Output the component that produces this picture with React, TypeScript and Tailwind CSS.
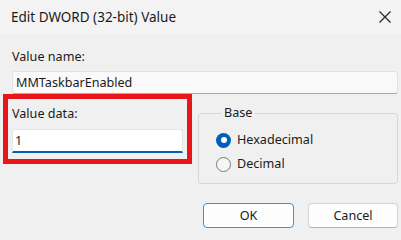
import React, { useState } from 'react';

type Base = 'hex' | 'dec';

function Radio({ checked, label, onClick }: { checked: boolean; label: string; onClick: () => void }) {
  return (
    <button type="button" onClick={onClick} className="flex h-[24px] items-center gap-[6px] text-left">
      {checked ? (
        <span className="flex h-[15px] w-[15px] items-center justify-center rounded-full bg-[#005fb8]">
          <span className="h-[6px] w-[6px] rounded-full bg-white" />
        </span>
      ) : (
        <span className="h-[15px] w-[15px] rounded-full border border-[#7a7a7a] bg-[#f6f6f6]" />
      )}
      <span>{label}</span>
    </button>
  );
}

export default function App() {
  const [value, setValue] = useState('1');
  const [base, setBase] = useState<Base>('hex');

  return (
    <div
      className="flex h-[240px] w-[401px] flex-col overflow-hidden bg-[#f0f0f0] text-[12.6px] leading-[18px] text-[#1b1b1b]"
      style={{ fontFamily: '"Noto Sans", "Open Sans", sans-serif' }}
    >
      {/* title bar */}
      <div className="flex h-[34px] shrink-0 items-center justify-between bg-[#f3f3f3] pl-[11px] pr-[9px]">
        <span className="text-[13.5px]">Edit DWORD (32-bit) Value</span>
        <svg width="14" height="14" viewBox="0 0 14 14" className="text-[#2b2b2b]">
          <path d="M1.5 1.5 L12.5 12.5 M12.5 1.5 L1.5 12.5" stroke="currentColor" strokeWidth="1.3" fill="none" />
        </svg>
      </div>

      <div className="flex flex-col px-[3px]">
        <div className="ml-[9px] mt-[14px]">Value name:</div>
        <div className="ml-[9px] mt-[5px] flex h-[23px] items-center rounded-[3px] border border-[#e2e2e2] border-b-[#a8a8a8] bg-[#f9f9f9] px-[3px]">
          MMTaskbarEnabled
        </div>

        <div className="flex">
          {/* highlighted Value data box */}
          <div className="flex h-[70px] w-[189px] flex-col border-[5px] border-[#e8161b] px-[4px]">
            <div className="mt-[6px]">Value data:</div>
            <div className="mt-[6px] flex h-[24px] items-center rounded-t-[3px] border border-[#e6e6e6] border-b-2 border-b-[#005fb8] bg-white px-[2px]">
              <input
                value={value}
                onChange={(e) => setValue(e.target.value)}
                className="w-full bg-transparent outline-none"
              />
            </div>
          </div>

          <fieldset className="ml-[6px] mt-[10px] h-[80px] w-[200px] rounded-[4px] border border-[#d6d6d6] pl-[17px]">
            <legend className="ml-[5px] px-[3px]">Base</legend>
            <div className="mt-[6px] flex flex-col">
              <Radio checked={base === 'hex'} label="Hexadecimal" onClick={() => setBase('hex')} />
              <Radio checked={base === 'dec'} label="Decimal" onClick={() => setBase('dec')} />
            </div>
          </fieldset>
        </div>

        <div className="mt-[19px] flex justify-end gap-[14px]">
          <button
            type="button"
            className="h-[25px] w-[91px] rounded-[4px] border-[1.5px] border-[#3d8fe0] bg-[#fdfdfd]"
          >
            OK
          </button>
          <button
            type="button"
            className="h-[25px] w-[90px] rounded-[4px] border border-[#d4d4d4] border-b-[#b4b4b4] bg-[#fdfdfd]"
          >
            Cancel
          </button>
        </div>
      </div>
    </div>
  );
}
